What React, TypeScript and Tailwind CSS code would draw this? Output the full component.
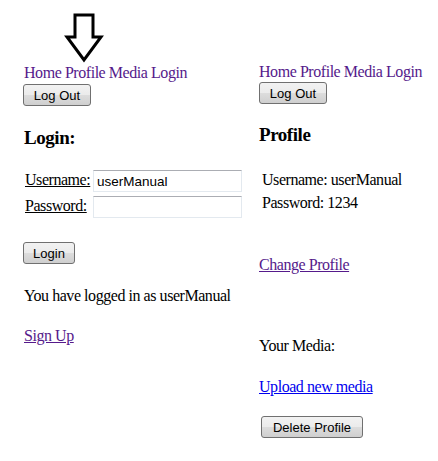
import React from 'react'

const serif = { fontFamily: '"Liberation Serif", "Times New Roman", serif' }

function WinButton({ label, className = '' }: { label: string; className?: string }) {
  return (
    <button
      className={`block h-[22px] rounded-[3px] border border-[#707070] bg-[linear-gradient(#f2f2f2_0%,#ebebeb_50%,#dddddd_50%,#cfcfcf_100%)] text-[13px] leading-none tracking-normal text-black font-['Liberation_Sans',Arial,sans-serif] ${className}`}
    >
      {label}
    </button>
  )
}

function NavLinks() {
  return (
    <div className="h-[18px] leading-[18px] text-[16px] text-[#551a8b] whitespace-nowrap">
      <a>Home</a> <a>Profile</a> <a>Media</a> <a>Login</a>
    </div>
  )
}

function DownArrow() {
  return (
    <svg className="absolute left-[64px] top-[12px]" width="42" height="52" viewBox="0 0 42 52">
      <polygon
        points="11,3 29,3 29,25 37,25 20,48 3,25 11,25"
        fill="white"
        stroke="black"
        strokeWidth="3"
        strokeLinejoin="miter"
      />
    </svg>
  )
}

export default function App() {
  return (
    <div className="relative w-[438px] h-[461px] bg-white text-black flex tracking-[-0.45px]" style={serif}>
      <DownArrow />

      {/* Login page */}
      <div className="w-[235px] shrink-0 pl-[24px] pt-[64px] text-[16px] leading-[18px]">
        <NavLinks />
        <WinButton label="Log Out" className="mt-[2px] -ml-[1px] w-[68px]" />

        <h3 className="mt-[21px] h-[22px] text-[19px] leading-[22px] font-bold">Login:</h3>

        <div className="mt-[21px] flex flex-col gap-[4px]">
          <div className="flex items-center h-[22px]">
            <label className="w-[69px] shrink-0 pl-[1px] underline -mt-[2px]">Username:</label>
            <input
              defaultValue="userManual"
              className="w-[149px] shrink-0 h-[22px] px-[3px] border border-[#e3e9ef] border-t-[#abadb3] text-[13.5px] tracking-normal font-['Liberation_Sans',Arial,sans-serif] outline-none"
            />
          </div>
          <div className="flex items-center h-[22px]">
            <label className="w-[69px] shrink-0 pl-[1px] underline -mt-[2px]">Password:</label>
            <input
              type="password"
              className="w-[149px] shrink-0 h-[22px] px-[3px] border border-[#e3e9ef] border-t-[#abadb3] text-[13px] outline-none"
            />
          </div>
        </div>

        <WinButton label="Login" className="mt-[24px] -ml-[1px] w-[52px]" />

        <p className="mt-[23px] whitespace-nowrap">You have logged in as userManual</p>
        <a className="block mt-[22px] text-[#551a8b] underline">Sign Up</a>
      </div>

      {/* Profile page */}
      <div className="flex-1 pl-[24px] pt-[63px] text-[16px] leading-[18px]">
        <NavLinks />
        <WinButton label="Log Out" className="mt-[1px] w-[68px]" />

        <h3 className="mt-[20px] h-[22px] text-[19px] leading-[22px] font-bold">Profile</h3>

        <div className="mt-[25px] pl-[3px]">
          <p>Username: userManual</p>
          <p className="mt-[5px]">Password: 1234</p>
        </div>

        <a className="block mt-[44px] text-[#551a8b] underline">Change Profile</a>

        <p className="mt-[63px]">Your Media:</p>
        <a className="block mt-[23px] text-[#0000ee] underline">Upload new media</a>

        <WinButton label="Delete Profile" className="mt-[20px] ml-[2px] w-[102px]" />
      </div>
    </div>
  )
}
